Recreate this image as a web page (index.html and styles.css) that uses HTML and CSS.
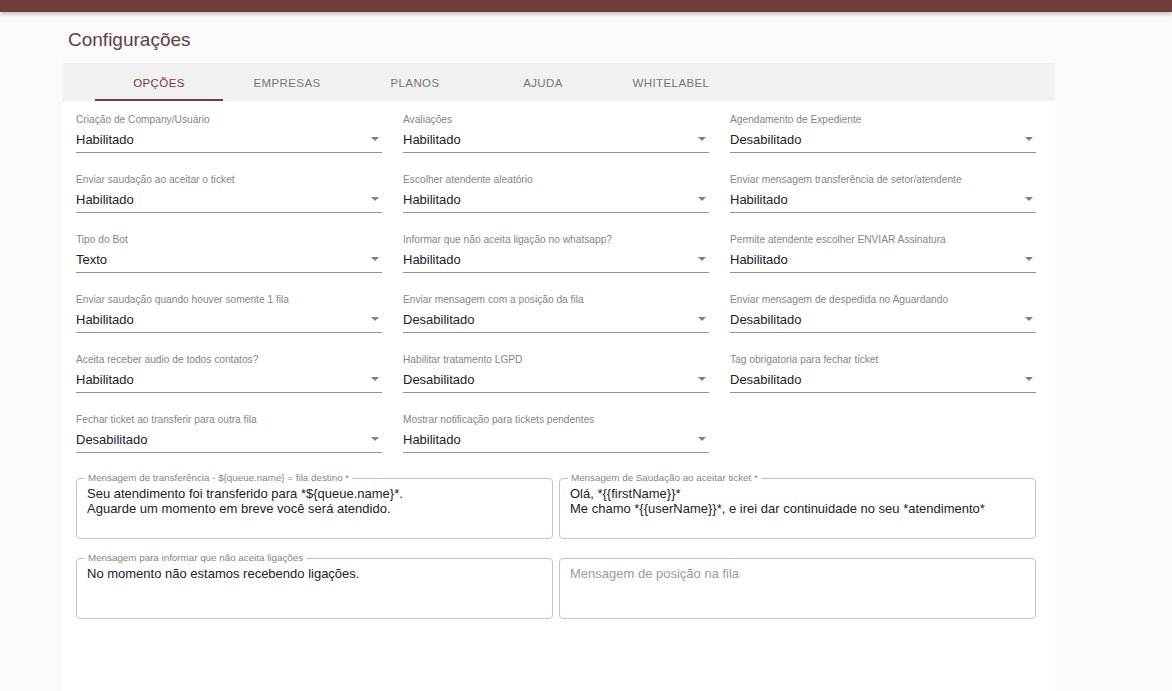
FILE: index.html
```
<!DOCTYPE html>
<html lang="pt-BR">
<head>
  <meta charset="UTF-8" />
  <meta name="viewport" content="width=device-width, initial-scale=1.0"/>
  <title>Configurações</title>
  <link rel="stylesheet" href="styles.css">
</head>
<body>

  <div class="topbar"></div>

  <main class="page">
    <h2 class="page-title">Configurações</h2>

    <div class="paper">
      <nav class="tabs">
        <div class="tab active">Opções</div>
        <div class="tab">Empresas</div>
        <div class="tab">Planos</div>
        <div class="tab">Ajuda</div>
        <div class="tab">Whitelabel</div>
      </nav>

      <div class="content">
        <div class="grid-selects">
          <div class="field">
            <label>Criação de Company/Usuário</label>
            <div class="select"><span>Habilitado</span><i class="arrow"></i></div>
          </div>
          <div class="field">
            <label>Avaliações</label>
            <div class="select"><span>Habilitado</span><i class="arrow"></i></div>
          </div>
          <div class="field">
            <label>Agendamento de Expediente</label>
            <div class="select"><span>Desabilitado</span><i class="arrow"></i></div>
          </div>

          <div class="field">
            <label>Enviar saudação ao aceitar o ticket</label>
            <div class="select"><span>Habilitado</span><i class="arrow"></i></div>
          </div>
          <div class="field">
            <label>Escolher atendente aleatório</label>
            <div class="select"><span>Habilitado</span><i class="arrow"></i></div>
          </div>
          <div class="field">
            <label>Enviar mensagem transferência de setor/atendente</label>
            <div class="select"><span>Habilitado</span><i class="arrow"></i></div>
          </div>

          <div class="field">
            <label>Tipo do Bot</label>
            <div class="select"><span>Texto</span><i class="arrow"></i></div>
          </div>
          <div class="field">
            <label>Informar que não aceita ligação no whatsapp?</label>
            <div class="select"><span>Habilitado</span><i class="arrow"></i></div>
          </div>
          <div class="field">
            <label>Permite atendente escolher ENVIAR Assinatura</label>
            <div class="select"><span>Habilitado</span><i class="arrow"></i></div>
          </div>

          <div class="field">
            <label>Enviar saudação quando houver somente 1 fila</label>
            <div class="select"><span>Habilitado</span><i class="arrow"></i></div>
          </div>
          <div class="field">
            <label>Enviar mensagem com a posição da fila</label>
            <div class="select"><span>Desabilitado</span><i class="arrow"></i></div>
          </div>
          <div class="field">
            <label>Enviar mensagem de despedida no Aguardando</label>
            <div class="select"><span>Desabilitado</span><i class="arrow"></i></div>
          </div>

          <div class="field">
            <label>Aceita receber audio de todos contatos?</label>
            <div class="select"><span>Habilitado</span><i class="arrow"></i></div>
          </div>
          <div class="field">
            <label>Habilitar tratamento LGPD</label>
            <div class="select"><span>Desabilitado</span><i class="arrow"></i></div>
          </div>
          <div class="field">
            <label>Tag obrigatoria para fechar ticket</label>
            <div class="select"><span>Desabilitado</span><i class="arrow"></i></div>
          </div>

          <div class="field">
            <label>Fechar ticket ao transferir para outra fila</label>
            <div class="select"><span>Desabilitado</span><i class="arrow"></i></div>
          </div>
          <div class="field">
            <label>Mostrar notificação para tickets pendentes</label>
            <div class="select"><span>Habilitado</span><i class="arrow"></i></div>
          </div>
        </div>

        <div class="grid-messages">
          <div class="outlined">
            <span class="legend">Mensagem de transferência - ${queue.name} = fila destino *</span>
            <textarea>Seu atendimento foi transferido para *${queue.name}*.
Aguarde um momento em breve você será atendido.</textarea>
          </div>
          <div class="outlined">
            <span class="legend">Mensagem de Saudação ao aceitar ticket *</span>
            <textarea>Olá, *{{firstName}}*
Me chamo *{{userName}}*, e irei dar continuidade no seu *atendimento*</textarea>
          </div>
          <div class="outlined">
            <span class="legend">Mensagem para informar que não aceita ligações</span>
            <textarea>No momento não estamos recebendo ligações.</textarea>
          </div>
          <div class="outlined">
            <textarea placeholder="Mensagem de posição na fila"></textarea>
          </div>
        </div>
      </div>
    </div>
  </main>

</body>
</html>
```

FILE: styles.css
```
body {
  margin: 0;
  background: #fafafa;
  font-family: "Liberation Sans", Arial, sans-serif;
  color: #212121;
  height: 691px;
  overflow: hidden;
}

.topbar {
  height: 12px;
  background: #733d3f;
  box-shadow: 0 2px 4px rgba(0, 0, 0, 0.25);
}

.page {
  margin-left: 63px;
  width: 992px;
}

.page-title {
  margin: 0;
  padding: 16px 0 12px 5px;
  font-size: 19px;
  font-weight: normal;
  line-height: 23px;
  color: #5e4243;
}

.paper {
  background: #fff;
  min-height: 640px;
}

.tabs {
  display: flex;
  height: 38px;
  padding-left: 32px;
  background: #f1f1f1;
}

.tab {
  width: 128px;
  display: flex;
  align-items: center;
  justify-content: center;
  box-sizing: border-box;
  font-size: 11.5px;
  letter-spacing: 0.4px;
  text-transform: uppercase;
  color: #777;
  padding-top: 1px;
}

.tab.active {
  color: #743c3e;
  border-bottom: 2px solid #743c3e;
  padding-top: 3px;
}

.content {
  padding: 13px 19px 0 13px;
}

.grid-selects {
  display: grid;
  grid-template-columns: 306px 306px 306px;
  column-gap: 21px;
  row-gap: 21px;
}

.field label {
  display: block;
  font-size: 10.2px;
  line-height: 12px;
  color: #858585;
  margin-bottom: 3px;
  white-space: nowrap;
}

.select {
  display: flex;
  align-items: center;
  justify-content: space-between;
  height: 20px;
  padding-bottom: 3px;
  border-bottom: 1px solid #929292;
  font-size: 13px;
  color: #222;
}

.arrow {
  width: 0;
  height: 0;
  margin-right: 3px;
  border-left: 4px solid transparent;
  border-right: 4px solid transparent;
  border-top: 4px solid #808080;
}

.grid-messages {
  display: grid;
  grid-template-columns: 477px 477px;
  column-gap: 6px;
  row-gap: 19px;
  margin-top: 25px;
}

.outlined {
  position: relative;
  height: 61px;
  box-sizing: border-box;
  border: 1px solid #c4c4c4;
  border-radius: 4px;
  padding: 7px 10px 0;
}

.outlined .legend {
  position: absolute;
  top: -7px;
  left: 8px;
  padding: 0 3px;
  background: #fff;
  font-size: 9.8px;
  line-height: 12px;
  color: #858585;
  white-space: nowrap;
}

.outlined textarea {
  display: block;
  width: 100%;
  height: 46px;
  margin: 0;
  padding: 0;
  border: none;
  outline: none;
  resize: none;
  overflow: hidden;
  font-family: inherit;
  font-size: 13px;
  line-height: 15px;
  color: #222;
}

.outlined textarea::placeholder {
  color: #9a9a9a;
}
```
